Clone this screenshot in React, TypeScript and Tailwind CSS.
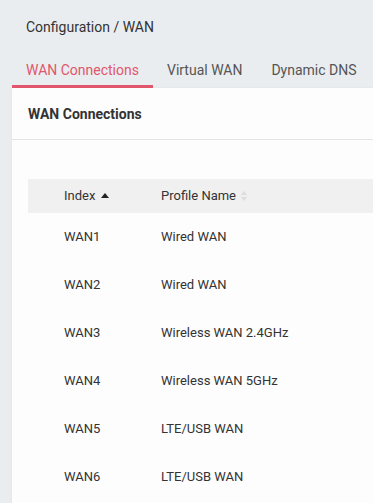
import React from "react";

const rows = [
  ["WAN1", "Wired WAN"],
  ["WAN2", "Wired WAN"],
  ["WAN3", "Wireless WAN 2.4GHz"],
  ["WAN4", "Wireless WAN 5GHz"],
  ["WAN5", "LTE/USB WAN"],
  ["WAN6", "LTE/USB WAN"],
];

export default function App() {
  return (
    <div
      className="w-[373px] h-[503px] overflow-hidden bg-[#e9edf0] text-[#333]"
      style={{ fontFamily: "Roboto, 'Noto Sans', sans-serif" }}
    >
      <div className="pl-[26px] pt-[17px] h-[50px] text-[14px] leading-[20px] text-[#333]">
        Configuration / WAN
      </div>
      <div className="flex pl-[12px] h-[38px] text-[14px]">
        <div className="px-[14px] pt-[10px] border-b-[3px] border-[#e2566b] text-[#e2566b] whitespace-nowrap">
          WAN Connections
        </div>
        <div className="px-[14px] pt-[10px] text-[#555] whitespace-nowrap">Virtual WAN</div>
        <div className="px-[15px] pt-[10px] text-[#555] whitespace-nowrap">Dynamic DNS</div>
      </div>
      <div className="ml-[12px] w-[400px] bg-[#fdfdfd] h-[500px] shadow-[0_0_2px_rgba(0,0,0,0.06)]">
        <div className="h-[52px] flex items-center pt-[1px] pl-[16px] font-bold text-[14px] text-[#333] border-b border-[#e4e4e4]">
          WAN Connections
        </div>
        <div className="pt-[39px] pl-[16px]">
          <div className="flex h-[34px] items-center bg-[#f0f0f0] text-[13px] text-[#333]">
            <div className="w-[133px] pl-[36px] flex items-center gap-[6px]">
              Index
              <svg width="8" height="6" viewBox="0 0 8 6"><path d="M4 0L8 5H0z" fill="#222" /></svg>
            </div>
            <div className="flex items-center gap-[4px]">
              Profile Name
              <svg width="8" height="12" viewBox="0 0 8 12">
                <path d="M4 1L7 5H1z" fill="#ddd" />
                <path d="M4 11L7 7H1z" fill="#ddd" />
              </svg>
            </div>
          </div>
          {rows.map(([a, b]) => (
            <div key={a} className="flex h-[48px] items-center text-[13px] text-[#333]">
              <div className="w-[133px] pl-[36px]">{a}</div>
              <div>{b}</div>
            </div>
          ))}
        </div>
      </div>
    </div>
  );
}
